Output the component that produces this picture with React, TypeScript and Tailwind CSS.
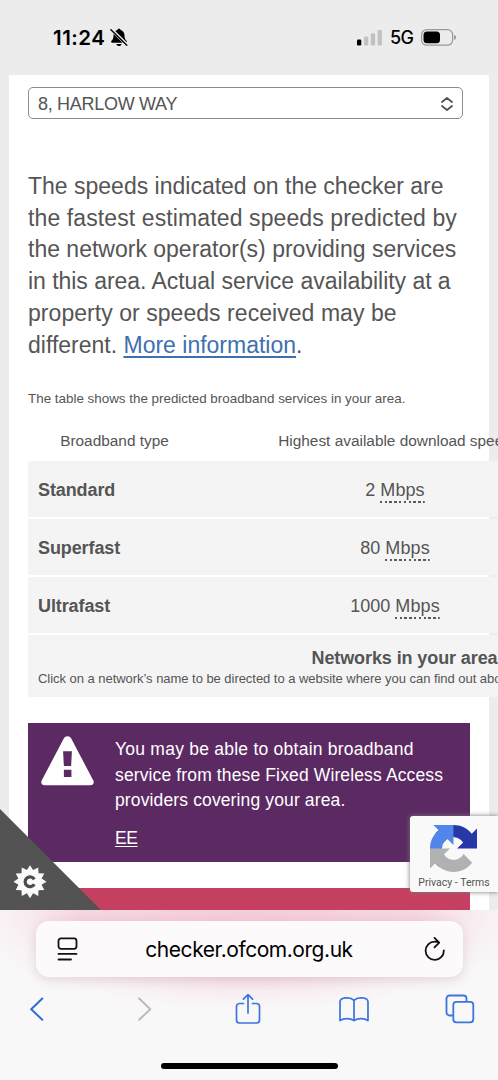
import { useId } from "react";

const rows = [
  { type: "Standard", speed: "2" },
  { type: "Superfast", speed: "80" },
  { type: "Ultrafast", speed: "1000" },
];

// 12-point cog badge: outer and inner radius alternate
const badgePoints = Array.from({ length: 24 }, (_, i) => {
  const r = i % 2 === 0 ? 16.5 : 12;
  const a = (i * Math.PI) / 12;
  return `${30 + r * Math.cos(a)},${73.7 + r * Math.sin(a)}`;
}).join(" ");

function StatusBar() {
  return (
    <header className="flex h-[75px] shrink-0 items-start justify-between pl-[53px] pr-[41px] pt-[25px]">
      <div className="flex h-[25px] items-center gap-[5px] text-black">
        <span className="font-['Inter'] text-[20.5px] font-semibold leading-[25px] tracking-[0.5px]">11:24</span>
        <svg width="18" height="19" viewBox="0 0 18 19">
          <path d="M9 .8c-.9 0-1.5.5-1.6 1.3C4.9 2.8 3.6 4.8 3.5 7.4c0 3-.8 4.1-2 5.4-.8.9-.4 2 .7 2h13.6c1.1 0 1.5-1.1.7-2-1.2-1.3-2-2.4-2-5.4-.1-2.6-1.4-4.6-3.9-5.3C10.5 1.3 9.9.8 9 .8zM6.5 15.9c.2 1.3 1.2 2.2 2.5 2.2s2.3-.9 2.5-2.2z" fill="#000" />
          <path d="M1.5 1.6 17.2 17" stroke="#ececec" strokeWidth="3.2" />
          <path d="M.9 1.7 16.8 17.2" stroke="#000" strokeWidth="1.4" strokeLinecap="round" />
        </svg>
      </div>
      <div className="flex h-[25px] items-center text-black">
        <svg width="25" height="17" viewBox="0 0 25 17">
          <rect x="0" y="10.5" width="4.3" height="6" rx="1.3" fill="#000" />
          <rect x="7" y="7.5" width="4.3" height="9" rx="1.3" fill="#c1c1c1" />
          <rect x="13.8" y="4.3" width="4.3" height="12.2" rx="1.3" fill="#c1c1c1" />
          <rect x="20.6" y="1" width="4.3" height="15.5" rx="1.3" fill="#c1c1c1" />
        </svg>
        <span className="ml-2 w-6 font-['Inter'] text-[18px] font-medium leading-[25px] tracking-[-0.6px]">5G</span>
        <svg className="ml-[7px]" width="36" height="17" viewBox="0 0 36 17">
          <rect x=".6" y=".6" width="31" height="15.6" rx="5" fill="none" stroke="#999" strokeWidth="1.2" />
          <rect x="2.5" y="2.5" width="16.5" height="11.8" rx="3.5" fill="#000" />
          <path d="M33 6c1.5.4 2 1.3 2 2.4s-.5 2-2 2.4z" fill="#999" />
        </svg>
      </div>
    </header>
  );
}

function SpeedTable() {
  return (
    <div className="w-[470px] overflow-hidden">
      <div className="w-[750px]">
        <div className="grid h-[42px] grid-cols-[173px_388px_189px] items-center text-[15.4px]">
          <div className="text-center">Broadband type</div>
          <div className="text-center">Highest available download speed</div>
        </div>
        <div className="flex flex-col gap-[2px]">
          {rows.map((row) => (
            <div
              key={row.type}
              className="grid h-14 grid-cols-[173px_388px_189px] items-center bg-[#f4f4f4] text-[18px]"
            >
              <div className="pl-[10px] pt-0.5 font-bold tracking-[-0.1px]">{row.type}</div>
              <div className="pt-0.5 text-center">
                {row.speed}{" "}
                <abbr className="inline-block bg-[repeating-linear-gradient(90deg,#5a5a5a_0_2.5px,transparent_2.5px_4.8px)] bg-[length:100%_2px] bg-bottom bg-no-repeat pb-0.5 leading-[22px] tracking-[0.1px] no-underline">
                  Mbps
                </abbr>
              </div>
            </div>
          ))}
          <div className="h-[62px] bg-[#f4f4f4] pt-[11px]">
            <div className="pl-[3px] text-center text-[18px] font-bold leading-6 tracking-[-0.1px]">
              Networks in your area
            </div>
            <div className="whitespace-nowrap pl-[10px] text-[13px] leading-[17px] tracking-[-0.04px]">
              Click on a network’s name to be directed to a website where you can find out about the services
            </div>
          </div>
        </div>
      </div>
    </div>
  );
}

function WirelessNotice() {
  return (
    <section className="mt-[26px] flex h-[139px] w-[442px] bg-[#5c2a63] pl-[13px] pt-[13px] text-white">
      <svg className="shrink-0" width="53" height="50" viewBox="0 0 54 51">
        <path d="M23.2 2.6c1.7-3 5.9-3 7.6 0l22.4 42.5c1.5 2.8-.1 5.2-3.1 5.2H3.9c-3 0-4.6-2.4-3.1-5.2z" fill="#fff" />
        <path d="M22.5 15.5h9l-.8 15h-7.4zM23.3 34.5h7.7v7.2h-7.7z" fill="#5c2a63" />
      </svg>
      <div className="ml-[21px] whitespace-nowrap pt-px text-[17.5px] leading-[25.5px] tracking-[0.13px]">
        <p>
          <span className="tracking-[0.24px]">You may be able to obtain broadband</span>
          <br />
          service from these Fixed Wireless Access
          <br />
          providers covering your area.
        </p>
        <a className="mt-3 block tracking-[-0.4px] underline underline-offset-2">EE</a>
      </div>
    </section>
  );
}

function CookieCorner() {
  return (
    <svg className="absolute bottom-0 left-0" width="102" height="102" viewBox="0 0 102 102">
      <path d="M0 1 101 102H0z" fill="#535353" />
      <polygon points={badgePoints} fill="#fafafa" />
      <path d="M34.3 71.4a4.9 4.9 0 1 0 0 4.800" fill="none" stroke="#4a4a4a" strokeWidth="3.2" />
    </svg>
  );
}

function RecaptchaBadge() {
  return (
    <div className="absolute bottom-[18px] right-0 flex h-[76px] w-[88px] flex-col items-center rounded-l-[3px] bg-[#f9f9f9] shadow-[0_0_5px_#777]">
      <svg className="mr-px mt-[9px] shrink-0" width="47" height="47" viewBox="0 0 64 64">
        <path d="M64 31.955l-.013-1.37V4.687l-7.16 7.16C50.967 4.674 42.033.093 32.03.093c-10.4 0-19.64 4.96-25.48 12.64l11.736 11.86c1.15-2.127 2.784-3.954 4.74-5.325 2.035-1.588 4.92-2.887 8.985-2.887.491 0 .87.057 1.149.165 5.035.397 9.4 3.176 11.97 7.209l-8.307 8.307 27.177-.107" fill="#2739a6" />
        <path d="M31.862.094l-1.37.013H4.594l7.16 7.16C4.581 13.127 0 22.061 0 32.064c0 10.4 4.96 19.64 12.64 25.48L24.5 45.808c-2.127-1.15-3.954-2.784-5.325-4.74-1.588-2.035-2.887-4.92-2.887-8.985 0-.491.057-.87.165-1.149.397-5.035 3.176-9.4 7.209-11.97l8.307 8.307-.107-27.177" fill="#5286ea" />
        <path d="M.001 32.045l.013 1.37v25.898l7.16-7.16c5.86 7.173 14.794 11.754 24.797 11.754 10.4 0 19.64-4.96 25.48-12.64L45.715 39.407c-1.15 2.127-2.784 3.954-4.74 5.325-2.035 1.588-4.92 2.887-8.985 2.887-.491 0-.87-.057-1.149-.165-5.035-.397-9.4-3.176-11.97-7.209l8.307-8.307-27.177.107" fill="#b1b1b1" />
      </svg>
      <div className="mt-1 whitespace-nowrap font-['Roboto'] text-[10.5px] leading-[14px] text-[#555]">
        Privacy - Terms
      </div>
    </div>
  );
}

function BrowserBar() {
  const glow = useId();
  return (
    <footer className="relative h-[170px] shrink-0 overflow-hidden bg-[#f9f8f9] pt-[11px]">
      <svg className="absolute left-0 top-0" width="498" height="170">
        <defs>
          <radialGradient id={glow}>
            <stop offset="0" stopColor="#f5ccd8" />
            <stop offset=".55" stopColor="#f5d2dd" stopOpacity=".9" />
            <stop offset="1" stopColor="#f9f8f9" stopOpacity="0" />
          </radialGradient>
        </defs>
        <rect x="-60" y="-110" width="618" height="220" fill={`url(#${glow})`} />
      </svg>
      <div className="relative mx-auto flex h-14 w-[427px] items-center justify-between rounded-[13px] bg-[#fdfafc] pl-[21px] pr-[17px] shadow-[0_3px_12px_rgba(90,30,60,0.14)]">
        <svg width="21" height="24" viewBox="0 0 21 24" fill="none" stroke="#111" strokeWidth="1.8" strokeLinecap="round">
          <rect x="1.5" y="1.3" width="18" height="10.5" rx="2.5" />
          <path d="M1.5 16.9H19.5M1.5 22.5H14" />
        </svg>
        <span className="pt-0.5 font-['Inter'] text-[21px] tracking-[-0.45px] text-black">checker.ofcom.org.uk</span>
        <svg width="25" height="25" viewBox="-4 0 25 25" fill="none" stroke="#111" strokeWidth="1.8" strokeLinecap="round" strokeLinejoin="round">
          <path d="M14.2 5.6Q12 4.7 9.7 4.7A9.1 9.1 0 1 0 18.8 13.3M9.5.9l4.7 4.7-4.7 4.7" />
        </svg>
      </div>
      <nav className="relative mt-[14px] flex h-9 items-center justify-between pl-5 pr-[22px]">
        <div className="flex w-8 justify-center">
          <svg width="15" height="26" viewBox="0 0 15 26" fill="none" stroke="#316bd6" strokeWidth="2" strokeLinecap="round" strokeLinejoin="round">
            <path d="M13.3 2.5 2.2 13.2l11.1 10.5" />
          </svg>
        </div>
        <div className="flex w-8 justify-end pr-1.5">
          <svg width="15" height="26" viewBox="0 0 15 26" fill="none" stroke="#bbb9bc" strokeWidth="2" strokeLinecap="round" strokeLinejoin="round">
            <path d="M2.2 2.5 13.3 13.2 2.2 23.7" />
          </svg>
        </div>
        <div className="flex w-8 justify-center">
          <svg width="26" height="32" viewBox="0 0 26 32" fill="none" stroke="#3a76db" strokeWidth="1.7" strokeLinecap="round" strokeLinejoin="round">
            <path d="M8.5 10.5H4.5A3 3 0 0 0 1.5 13.5V27a3 3 0 0 0 3 3H21.5a3 3 0 0 0 3-3V13.5a3 3 0 0 0-3-3H17.5M13 20V2M8.4 6.2 13 1.7l4.6 4.5" />
          </svg>
        </div>
        <div className="flex w-8 justify-center">
          <svg width="32" height="27" viewBox="0 0 32 28" fill="none" stroke="#3a76db" strokeWidth="1.8" strokeLinejoin="round">
            <path d="M16 4.5C13.5 2 10 1.7 7.5 2 4.5 2.3 1.5 3.5 1.5 6v19.5C5 22.8 12 22.5 16 25.5c4-3 11-2.7 14.5 0V6c0-2.5-3-3.7-6-4-2.5-.3-6 0-8.5 2.5zM16 4.5v21" />
          </svg>
        </div>
        <div className="flex w-8 justify-center">
          <svg width="30" height="30" viewBox="0 0 30 30" fill="none" stroke="#3a76db" strokeWidth="1.8" strokeLinejoin="round">
            <path d="M7.8 21.5H4.5a3 3 0 0 1-3-3V4.5a3 3 0 0 1 3-3H18.5a3 3 0 0 1 3 3V7.8" />
            <rect x="8.3" y="7.8" width="20" height="20.5" rx="3" />
          </svg>
        </div>
      </nav>
      <div className="relative mx-auto mt-9 h-1.5 w-[177px] rounded-full bg-black" />
    </footer>
  );
}

export default function App() {
  return (
    <div className="flex h-[1080px] w-[498px] flex-col overflow-hidden bg-[#ececec] font-['Liberation_Sans',sans-serif] text-[#555]">
      <StatusBar />
      <main className="relative h-[835px] shrink-0 overflow-hidden">
        <div className="ml-[9px] h-full w-[480px] bg-white pl-[19px] pt-3">
          <div className="flex h-8 w-[435px] items-center justify-between rounded-[5px] border border-[#8c8c8c] pl-[9px] pr-2 pt-px text-[18px] tracking-[-0.3px]">
            <span className="pt-px">8, HARLOW WAY</span>
            <svg width="14" height="16" viewBox="0 0 14 16" fill="none" stroke="#505050" strokeWidth="1.7" strokeLinecap="round" strokeLinejoin="round">
              <path d="M2 6 7 2l5 4M2 10l5 4 5-4" />
            </svg>
          </div>
          <p className="mt-[52px] whitespace-nowrap text-[23px] leading-[31.7px]">
            The speeds indicated on the checker are
            <br />
            <span className="tracking-[0.11px]">the fastest estimated speeds predicted by</span>
            <br />
            the network operator(s) providing services
            <br />
            <span className="tracking-[-0.04px]">in this area. Actual service availability at a</span>
            <br />
            <span className="tracking-[0.05px]">property or speeds received may be</span>
            <br />
            different.{" "}
            <a className="text-[#3f70ad] underline decoration-[1.5px] underline-offset-[3px]">More information</a>.
          </p>
          <p className="mt-7 h-[30px] text-[13.4px] leading-5">
            The table shows the predicted broadband services in your area.
          </p>
          <SpeedTable />
          <WirelessNotice />
          <div className="mt-[26px] h-[30px] w-[442px] bg-[#c54060]" />
        </div>
        <CookieCorner />
        <RecaptchaBadge />
      </main>
      <BrowserBar />
    </div>
  );
}
